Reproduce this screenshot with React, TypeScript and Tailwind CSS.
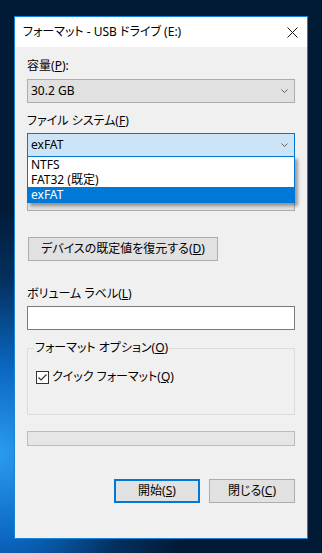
import React from "react";

function Chevron() {
  return (
    <svg width="7" height="4" viewBox="0 0 7 4" className="shrink-0">
      <path d="M0.5 0.5 L3.5 3.5 L6.5 0.5" fill="none" stroke="#5f5f5f" strokeWidth="1" />
    </svg>
  );
}

function Combo({ value, active }: { value: string; active?: boolean }) {
  return (
    <div
      className={
        active
          ? "flex h-[24px] w-[268px] items-center justify-between border border-[#0078d7] bg-[#cce4f7] pl-[3px] pr-[6px]"
          : "flex h-[24px] w-[268px] items-center justify-between border border-[#adadad] bg-[#e1e1e1] pl-[3px] pr-[6px]"
      }
    >
      <span>{value}</span>
      <Chevron />
    </div>
  );
}

function Label({ text, key1, rest }: { text: string; key1: string; rest?: string }) {
  return (
    <div className="h-4 leading-4">
      {text}(<span className="underline">{key1}</span>){rest}
    </div>
  );
}

export default function App() {
  const options = ["NTFS", "FAT32 (既定)", "exFAT"];

  return (
    <div className="h-[553px] w-[322px] overflow-hidden bg-[radial-gradient(ellipse_60%_45%_at_0%_82%,#2a9cf0_0%,#0b66c0_35%,#03305f_70%,#011a35_100%)] pl-[14px] pt-[16px] font-['Noto_Sans','Noto_Sans_CJK_JP',sans-serif] text-[12px] text-black [font-feature-settings:'palt']">
      <div className="flex h-[523px] w-[294px] flex-col border border-[#1883d7] bg-[#f0f0f0]">
        <div className="flex h-[30px] shrink-0 items-center justify-between bg-white pl-[8px] pr-[9px]">
          <span>フォーマット - USB ドライブ (E:)</span>
          <svg width="11" height="11" viewBox="0 0 11 11">
            <path d="M0.5 0.5 L10.5 10.5 M10.5 0.5 L0.5 10.5" stroke="#111" strokeWidth="1" />
          </svg>
        </div>

        <div className="flex flex-col px-[12px]">
          <div className="mt-[11px]">
            <Label text="容量" key1="P" rest=":" />
          </div>
          <div className="mt-[5px]">
            <Combo value="30.2 GB" />
          </div>

          <div className="mt-[10px]">
            <Label text="ファイル システム" key1="F" />
          </div>
          <div className="relative z-10 mt-[4px]">
            <Combo value="exFAT" active />
            {/* open drop-down list, covers the allocation unit row */}
            <div className="absolute left-0 top-[23px] w-[268px] border border-[#0078d7] bg-white shadow-[3px_3px_3px_rgba(0,0,0,0.35)]">
              {options.map((option) => (
                <div
                  key={option}
                  className={
                    option === "exFAT"
                      ? "h-[15px] bg-[#0078d7] pl-[3px] leading-[15px] text-white"
                      : "h-[15px] pl-[3px] leading-[15px]"
                  }
                >
                  {option}
                </div>
              ))}
            </div>
          </div>

          {/* hidden under the list */}
          <div className="invisible mt-[10px]">
            <Label text="アロケーション ユニット サイズ" key1="A" />
          </div>
          <div className="mt-[4px]">
            <Combo value="4096 バイト" />
          </div>

          <button className="ml-[1px] mt-[26px] h-[24px] w-[190px] border border-[#adadad] bg-[#e1e1e1] text-center leading-[22px]">
            デバイスの既定値を復元する(<span className="underline">D</span>)
          </button>

          <div className="mt-[25px]">
            <Label text="ボリューム ラベル" key1="L" />
          </div>
          <div className="mt-[4px] h-[24px] w-[268px] border border-[#7a7a7a] bg-white" />

          <fieldset className="mt-[10px] h-[75px] w-[268px] border border-[#dcdcdc]">
            <legend className="ml-[6px] px-[1px] leading-4">
              フォーマット オプション(<span className="underline">O</span>)
            </legend>
            <div className="ml-[8px] mt-[13px] flex items-center gap-[3px]">
              <svg width="13" height="13" viewBox="0 0 13 13" className="shrink-0">
                <rect x="0.5" y="0.5" width="12" height="12" fill="#fff" stroke="#333" />
                <path d="M2.5 6.5 L5 9 L10.5 3.5" fill="none" stroke="#333" strokeWidth="1.2" />
              </svg>
              <span className="leading-4">
                クイック フォーマット(<span className="underline">Q</span>)
              </span>
            </div>
          </fieldset>

          <div className="mt-[16px] h-[15px] w-[268px] border border-[#bcbcbc] bg-[#e6e6e6]" />

          <div className="mt-[33px] flex w-[268px] justify-end gap-[9px]">
            <button className="h-[24px] w-[86px] border-2 border-[#0078d7] bg-[#e1e1e1] leading-[20px]">
              開始(<span className="underline">S</span>)
            </button>
            <button className="h-[24px] w-[86px] border border-[#adadad] bg-[#e1e1e1] leading-[22px]">
              閉じる(<span className="underline">C</span>)
            </button>
          </div>
        </div>
      </div>
    </div>
  );
}
